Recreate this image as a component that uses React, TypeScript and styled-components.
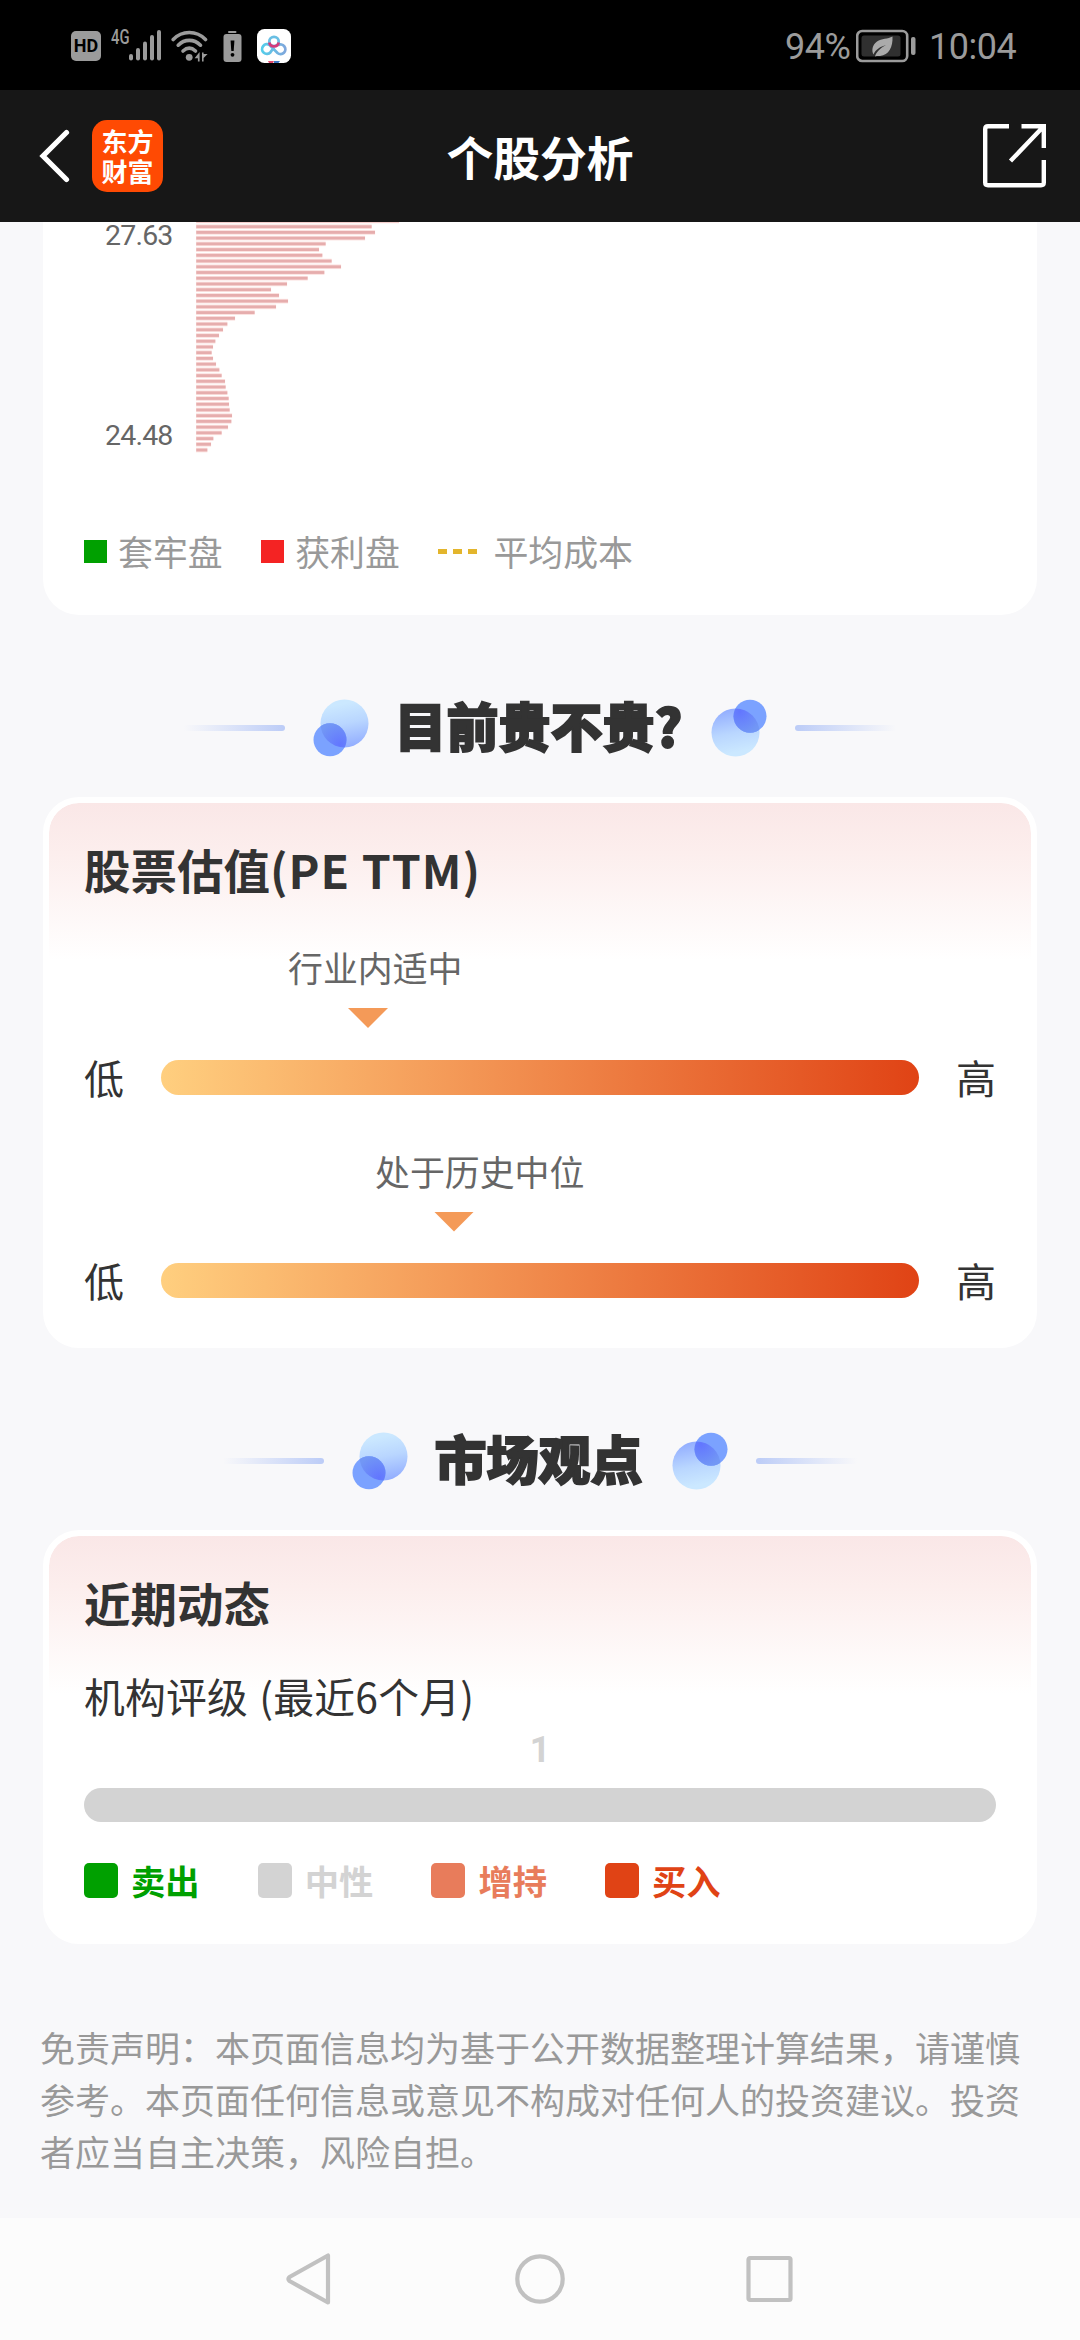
import React from "react";
import styled, { createGlobalStyle } from "styled-components";

const CJK = `"Noto Sans CJK SC", sans-serif`;
const LATIN = `Roboto, "Noto Sans CJK SC", sans-serif`;

const GlobalStyle = createGlobalStyle`
  * { box-sizing: border-box; }
  body { margin: 0; background: #f8f8fa; font-family: ${CJK}; }
  svg { display: block; flex: none; }
`;

const Screen = styled.div`
  display: flex;
  flex-direction: column;
  width: 1080px;
  height: 2340px;
  overflow: hidden;
  background: #f8f8fa;
`;

/* ---------- status bar ---------- */

const StatusBar = styled.div`
  display: flex;
  justify-content: space-between;
  flex: none;
  height: 90px;
  padding: 29px 64px 0 71px;
  background: #000;
  color: #9b9b9b;
`;

const StatusGroup = styled.div`
  display: flex;
  align-items: flex-start;
  height: 36px;
`;

const HdBadge = styled.span`
  width: 30px;
  height: 30px;
  margin-top: 2px;
  border-radius: 5px;
  background: #9b9b9b;
  color: #000;
  font: 700 18px/30px ${LATIN};
  text-align: center;
`;

const NetworkType = styled.span`
  width: 18px;
  margin-left: 10px;
  font: 500 20px/17px "Roboto", sans-serif;
  span {
    display: block;
    transform: scaleX(0.74);
    transform-origin: left;
  }
`;

const Gap = styled.i<{ $w: number }>`
  flex: none;
  width: ${(p) => p.$w}px;
`;

const StatusText = styled.span<{ $w: number }>`
  width: ${(p) => p.$w}px;
  font: 400 36px/37px ${LATIN};
  white-space: nowrap;
  letter-spacing: -0.5px;
`;

/* ---------- header ---------- */

const Header = styled.header`
  display: grid;
  grid-template-columns: 1fr auto 1fr;
  align-items: center;
  flex: none;
  height: 132px;
  padding: 0 33px;
  background: #171717;
  color: #fff;
`;

const HeaderLeft = styled.div`
  display: flex;
  align-items: center;
  gap: 22px;
  padding-left: 5px;
`;

const Logo = styled.div`
  display: flex;
  flex-direction: column;
  justify-content: center;
  align-items: center;
  width: 71px;
  height: 72px;
  border-radius: 15px;
  background: #ff4a03;
  font: 700 26px/30px ${CJK};
`;

const HeaderTitle = styled.h1`
  margin: 0;
  font: 700 46.8px/60px ${CJK};
`;

const HeaderRight = styled.div`
  display: flex;
  justify-content: flex-end;
`;

/* ---------- content ---------- */

const Content = styled.main`
  display: flex;
  flex-direction: column;
  flex: none;
  height: 1996px;
  padding: 0 43px;
`;

const ChartCard = styled.section`
  display: flex;
  flex-direction: column;
  flex: none;
  height: 393px;
  border-radius: 0 0 36px 36px;
  background: #fff;
`;

const ChartRow = styled.div`
  display: flex;
  height: 240px;
  padding-left: 62px;
`;

const Axis = styled.div`
  display: flex;
  flex-direction: column;
  justify-content: space-between;
  width: 91px;
  height: 228px;
  color: #666;
  font: 400 28.5px/28px ${LATIN};
  letter-spacing: -0.8px;
`;

const ChartLegend = styled.div`
  display: flex;
  align-items: center;
  height: 50px;
  margin: 64px 0 0 41px;
  color: #999;
  font: 400 34.9px/50px ${CJK};
`;

const LegendItem = styled.div<{ $gap: number }>`
  display: flex;
  align-items: center;
  gap: ${(p) => p.$gap}px;
  margin-right: 38.5px;
`;

const Square = styled.i<{ $c: string }>`
  width: 23px;
  height: 23px;
  background: ${(p) => p.$c};
`;

const Dashes = styled.div`
  display: flex;
  gap: 6px;
  i {
    width: 9px;
    height: 5px;
    background: #e3b52c;
  }
`;

const SectionHeading = styled.div`
  display: flex;
  justify-content: center;
  align-items: center;
  flex: none;
  height: 182px;
  padding: 84px 0 40px;
`;

const HeadingRule = styled.i<{ $flip?: boolean }>`
  width: 101px;
  height: 6px;
  margin: ${(p) => (p.$flip ? "0 0 0 28px" : "0 28px 0 0")};
  border-radius: ${(p) => (p.$flip ? "3px 0 0 3px" : "0 3px 3px 0")};
  background: linear-gradient(
    ${(p) => (p.$flip ? "to left" : "to right")},
    rgba(188, 204, 247, 0),
    #bcccf7
  );
`;

const HeadingText = styled.h2<{ $w: number }>`
  width: ${(p) => p.$w}px;
  margin: -6px 28px 0;
  color: #333;
  font: 900 52px/58px ${CJK};
  -webkit-text-stroke: 1.8px #333;
  text-align: center;
  text-indent: -3px;
  white-space: nowrap;
`;

const Card = styled.section<{ $h: number }>`
  display: flex;
  flex-direction: column;
  flex: none;
  height: ${(p) => p.$h}px;
  padding: 36px 35px 0;
  border: 6px solid #fff;
  border-radius: 36px;
  background: linear-gradient(#fae7e7, #fceeed 50px, #fff 158px) padding-box, #fff;
`;

const CardTitle = styled.h3`
  margin: 0;
  color: #333;
  font: 700 46.5px/60px ${CJK};
  white-space: nowrap;
  span {
    letter-spacing: 1px;
  }
`;

const Gauge = styled.div<{ $top: number }>`
  display: flex;
  flex-direction: column;
  margin-top: ${(p) => p.$top}px;
`;

const GaugeLabel = styled.div<{ $x: number }>`
  margin-left: ${(p) => p.$x}px;
  color: #666;
  font: 400 34.9px/50px ${CJK};
`;

const Pointer = styled.i<{ $x: number }>`
  width: 40px;
  height: 20px;
  margin: 16px 0 0 ${(p) => p.$x}px;
  background: #f49a58;
  clip-path: polygon(0 0, 100% 0, 50% 100%);
`;

const GaugeRow = styled.div`
  display: flex;
  justify-content: space-between;
  align-items: center;
  height: 35px;
  margin-top: 31.5px;
  color: #333;
  font: 400 40px/35px ${CJK};
`;

const GaugeBar = styled.i`
  width: 758px;
  height: 35px;
  border-radius: 18px;
  background: linear-gradient(to right, #ffcf7f, #f49a58 38%, #e04315);
`;

const SubTitle = styled.div`
  margin-top: 36px;
  color: #333;
  font: 400 40.8px/56px ${CJK};
  white-space: nowrap;
  word-spacing: 2px;
  letter-spacing: 0.2px;
`;

const RatingCount = styled.div`
  height: 36px;
  margin-top: 8px;
  color: #d3d3d3;
  font: 700 36px/36px ${LATIN};
  text-align: center;
`;

const RatingBar = styled.div`
  height: 34px;
  margin-top: 20px;
  border-radius: 17px;
  background: #d3d3d3;
`;

const RatingLegend = styled.div`
  display: flex;
  margin-top: 36px;
`;

const RatingItem = styled.div<{ $c: string }>`
  display: flex;
  align-items: center;
  gap: 13px;
  width: 173.7px;
  color: ${(p) => p.$c};
  font: 700 34.3px/44px ${CJK};
  i {
    width: 34px;
    height: 35px;
    border-radius: 5px;
    background: ${(p) => p.$c};
  }
`;

const Disclaimer = styled.p`
  margin: 77px -20px 0 -3px;
  color: #999;
  font: 400 35px/52px ${CJK};
  white-space: nowrap;
`;

const NavBar = styled.nav`
  display: flex;
  justify-content: center;
  align-items: center;
  gap: 180px;
  flex: none;
  height: 122px;
  background: #fcfcfc;
`;

/* ---------- drawings ---------- */

const SignalIcon = () => (
  <svg width="33" height="32" viewBox="0 0 33 32" fill="#9b9b9b">
    <rect x="0" y="25" width="4" height="6.5" rx="2" />
    <rect x="7" y="19" width="4" height="12.5" rx="2" />
    <rect x="14" y="12.500" width="4" height="19" rx="2" />
    <rect x="21" y="6" width="4" height="25.500" rx="2" />
    <rect x="28" y="1" width="4" height="30.500" rx="2" />
  </svg>
);

const WifiIcon = () => (
  <svg width="38" height="34" viewBox="0 0 38 34" fill="none" stroke="#9b9b9b" strokeWidth="3.600" strokeLinecap="round">
    <path d="M2.200 10.500C11 1.200 25.500 1.200 34.500 10.500" />
    <path d="M7.200 16.200C13.500 9.800 23 9.800 29.500 16.200" />
    <path d="M12 22C16 18.300 20.500 18.300 24.500 22" />
    <circle cx="18.200" cy="28.300" r="3.400" fill="#9b9b9b" stroke="none" />
    <path d="M28.600 23v9.500h-1.700v-3.200h-3.300zM31 23.500v9h1.600v-3.500l4-4h-4v-1.500z" fill="#9b9b9b" stroke="none" />
  </svg>
);

const BatteryAlertIcon = () => (
  <svg width="19" height="34" viewBox="0 0 19 34">
    <rect x="5" y="2" width="8.500" height="2" rx="1" fill="#9b9b9b" />
    <rect x="0.500" y="5" width="18" height="28" rx="3" fill="#9b9b9b" />
    <path d="M7.600 11.500h3.800l-.7 10.500h-2.400z" fill="#000" />
    <circle cx="9.500" cy="25.800" r="1.900" fill="#000" />
  </svg>
);

const CloudAppIcon = () => (
  <svg width="34" height="34" viewBox="0 0 34 34">
    <defs>
      <linearGradient id="cloudLoop" x1="0" x2="1">
        <stop offset="0" stopColor="#55cdea" />
        <stop offset="1" stopColor="#7fa7dc" />
      </linearGradient>
    </defs>
    <rect width="34" height="34" rx="7.500" fill="#fff" />
    <g fill="none" strokeWidth="2.800">
      <path d="M17 18.500L13.500 23.200A4.800 4.800 0 1 1 12.800 16.200L20.500 24A4.800 4.800 0 1 0 21 16.200" stroke="url(#cloudLoop)" />
      <circle cx="17" cy="12.500" r="4.700" stroke="#69bfe4" />
      <path d="M12.300 13.500a4.800 4.800 0 0 0 9.400 0" stroke="#d33b7b" />
    </g>
    <path d="M11 32h6l-1 2h-4z" fill="#e0486c" />
    <path d="M17 32h6l-1.500 2H17z" fill="#3f78c3" />
  </svg>
);

const BatteryIcon = () => (
  <svg width="60" height="34" viewBox="0 0 60 34">
    <rect x="1.200" y="2" width="50" height="30" rx="5" fill="none" stroke="#9b9b9b" strokeWidth="2.600" />
    <rect x="5.500" y="6.500" width="39" height="21" rx="2.500" fill="#303030" />
    <path d="M36.500 7.500C37 18 33 26 24 27C21.500 27 20 26.500 19 27.500C20 23.500 24 19 30 16C24.500 17.500 19.500 20.500 17.500 25.500C15.500 22 16 16 21 12.500C25.500 9.500 32 10 36.500 7.500Z" fill="#aaa" />
    <rect x="55" y="8" width="4.500" height="18" rx="2" fill="#9b9b9b" />
  </svg>
);

const BackIcon = () => (
  <svg width="32" height="54" viewBox="0 0 32 54">
    <path d="M28.500 3.500L5 27L28.500 50.500" fill="none" stroke="#fff" strokeWidth="5.200" strokeLinecap="round" strokeLinejoin="miter" />
  </svg>
);

const ShareIcon = () => (
  <svg width="64" height="64" viewBox="0 0 64 64" fill="none" stroke="#fff" strokeWidth="4.400">
    <path d="M26 2.200H5Q2.200 2.200 2.200 5V58.500Q2.200 61.200 5 61.200H58Q60.800 61.200 60.800 58.500V36" />
    <path d="M38.500 2.200H60.800V24M60 3L27.500 37" />
  </svg>
);

const Blobs = ({ flip = false }: { flip?: boolean }) => {
  const id = flip ? "r" : "l";
  return (
    <svg width="56" height="58" viewBox="0 0 56 58">
      <defs>
        <linearGradient id={`big-${id}`} x1="0.400" y1="0" x2="0.600" y2="1">
          <stop offset="0.100" stopColor="#cbe8ff" />
          <stop offset="0.500" stopColor="#b9d6ff" />
          <stop offset="1" stopColor="#92adff" />
        </linearGradient>
        <radialGradient id={`mix-${id}`} cx="0.800" cy="0.650" r="0.700">
          <stop offset="0" stopColor="#6276ff" />
          <stop offset="1" stopColor="#7297f5" />
        </radialGradient>
        <clipPath id={`clip-${id}`}>
          <circle cx="31.500" cy="24.500" r="24" />
        </clipPath>
      </defs>
      <g transform={flip ? "rotate(180 28 29)" : undefined}>
        <circle cx="31.500" cy="24.500" r="24" fill={`url(#big-${id})`} />
        <circle cx="17" cy="40.800" r="16.500" fill="#7ba2ff" />
        <circle cx="17" cy="40.800" r="16.500" fill={`url(#mix-${id})`} clipPath={`url(#clip-${id})`} />
      </g>
    </svg>
  );
};

/* Bar lengths of the cost distribution, highest price first. */
const COST_BARS = [
  202.7, 175.3, 178.7, 168.7, 129.3, 122.7, 126, 135.3, 144.7, 128, 111.3, 90.7, 74.7, 82.7, 91.7,
  79.7, 58.3, 38.7, 31, 26.7, 22.7, 19, 16.7, 15.3, 16.7, 19.7, 23, 25.3, 28.7, 29.3, 31, 32.3, 32.7,
  33.3, 35.7, 35, 31.7, 25.3, 17, 14.7, 11,
];

const CostChart = () => (
  <svg width="210" height="240" viewBox="0 0 210 240">
    {COST_BARS.map((w, i) => {
      const y = -1.05 + i * 5.727;
      return (
        <g key={i}>
          <rect x="0" y={y - 2.3} width={w + 0.4} height="4.600" fill="#fbe0de" />
          <rect x="0.300" y={y - 1.4} width={w} height="2.800" fill="#e6adad" />
        </g>
      );
    })}
  </svg>
);

const Heading = ({ text, width }: { text: string; width: number }) => (
  <SectionHeading>
    <HeadingRule />
    <Blobs />
    <HeadingText $w={width}>{text}</HeadingText>
    <Blobs flip />
    <HeadingRule $flip />
  </SectionHeading>
);

const ValuationGauge = (p: { top: number; label: string; labelX: number; pointerX: number }) => (
  <Gauge $top={p.top}>
    <GaugeLabel $x={p.labelX}>{p.label}</GaugeLabel>
    <Pointer $x={p.pointerX} />
    <GaugeRow>
      <span>低</span>
      <GaugeBar />
      <span>高</span>
    </GaugeRow>
  </Gauge>
);

const RATINGS = [
  { name: "卖出", color: "#00a000" },
  { name: "中性", color: "#d3d3d3" },
  { name: "增持", color: "#e87c5b" },
  { name: "买入", color: "#e04315" },
];

export default function App() {
  return (
    <Screen>
      <GlobalStyle />
      <StatusBar>
        <StatusGroup>
          <HdBadge>HD</HdBadge>
          <NetworkType>
            <span>4G</span>
          </NetworkType>
          <SignalIcon />
          <Gap $w={9} />
          <WifiIcon />
          <Gap $w={14} />
          <BatteryAlertIcon />
          <Gap $w={15} />
          <CloudAppIcon />
        </StatusGroup>
        <StatusGroup>
          <StatusText $w={71}>94%</StatusText>
          <BatteryIcon />
          <Gap $w={13} />
          <StatusText $w={87}>10:04</StatusText>
        </StatusGroup>
      </StatusBar>

      <Header>
        <HeaderLeft>
          <BackIcon />
          <Logo>
            <span>东方</span>
            <span>财富</span>
          </Logo>
        </HeaderLeft>
        <HeaderTitle>个股分析</HeaderTitle>
        <HeaderRight>
          <ShareIcon />
        </HeaderRight>
      </Header>

      <Content>
        <ChartCard>
          <ChartRow>
            <Axis>
              <span>27.63</span>
              <span>24.48</span>
            </Axis>
            <CostChart />
          </ChartRow>
          <ChartLegend>
            <LegendItem $gap={11}>
              <Square $c="#00a000" />
              套牢盘
            </LegendItem>
            <LegendItem $gap={11}>
              <Square $c="#f42323" />
              获利盘
            </LegendItem>
            <LegendItem $gap={16}>
              <Dashes>
                <i />
                <i />
                <i />
              </Dashes>
              平均成本
            </LegendItem>
          </ChartLegend>
        </ChartCard>

        <Heading text="目前贵不贵?" width={286} />
        <Card $h={551}>
          <CardTitle>
            股票估值<span>(PE TTM)</span>
          </CardTitle>
          <ValuationGauge top={43} label="行业内适中" labelX={204} pointerX={264} />
          <ValuationGauge top={51} label="处于历史中位" labelX={291} pointerX={350} />
        </Card>

        <Heading text="市场观点" width={208} />
        <Card $h={414}>
          <CardTitle>近期动态</CardTitle>
          <SubTitle>机构评级 (最近6个月)</SubTitle>
          <RatingCount>1</RatingCount>
          <RatingBar />
          <RatingLegend>
            {RATINGS.map((r) => (
              <RatingItem key={r.name} $c={r.color}>
                <i />
                {r.name}
              </RatingItem>
            ))}
          </RatingLegend>
        </Card>

        <Disclaimer>
          免责声明：本页面信息均为基于公开数据整理计算结果，请谨慎
          <br />
          参考。本页面任何信息或意见不构成对任何人的投资建议。投资
          <br />
          者应当自主决策，风险自担。
        </Disclaimer>
      </Content>

      <NavBar>
        <svg width="50" height="54" viewBox="0 0 50 54">
          <path d="M43 3.500V50.500L4.500 29Q2.500 27 4.500 25Z" fill="none" stroke="#c1c1c1" strokeWidth="4.200" strokeLinejoin="round" />
        </svg>
        <svg width="50" height="50" viewBox="0 0 50 50">
          <circle cx="25" cy="25" r="22.700" fill="none" stroke="#c1c1c1" strokeWidth="4.200" />
        </svg>
        <svg width="50" height="50" viewBox="0 0 50 50">
          <rect x="3.500" y="4" width="42" height="42" rx="1.500" fill="none" stroke="#c1c1c1" strokeWidth="4.200" />
        </svg>
      </NavBar>
    </Screen>
  );
}
